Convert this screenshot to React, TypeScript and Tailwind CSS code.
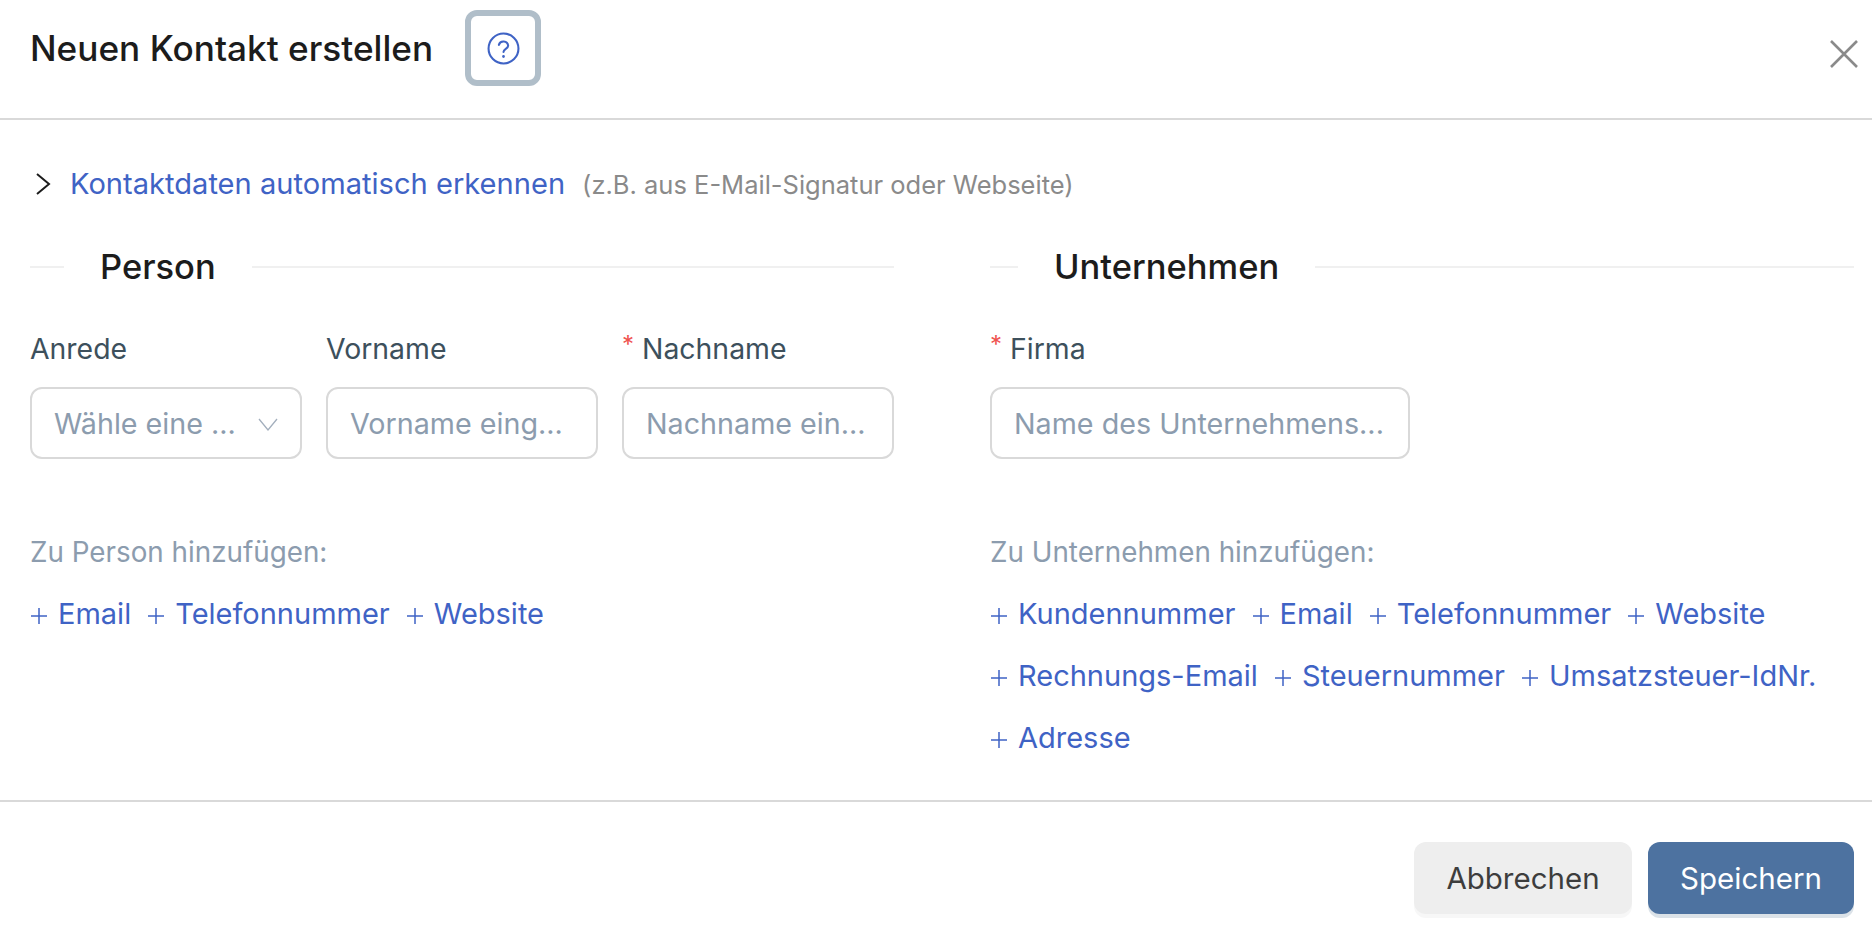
const personLinks = ['Email', 'Telefonnummer', 'Website'];
const companyLinks = [
  'Kundennummer',
  'Email',
  'Telefonnummer',
  'Website',
  'Rechnungs-Email',
  'Steuernummer',
  'Umsatzsteuer-IdNr.',
  'Adresse',
];

function SectionTitle({ title, lead }: { title: string; lead: string }) {
  return (
    <div className="flex items-center h-[40px]">
      <div className={`${lead} h-[2px] bg-[#f0f0f0]`} />
      <h2 className="px-[36px] text-[34.5px] leading-[40px] font-medium text-[#1c1c1c] whitespace-nowrap">{title}</h2>
      <div className="flex-1 h-[2px] bg-[#f0f0f0]" />
    </div>
  );
}

function FieldLabel({ text, required }: { text: string; required?: boolean }) {
  return (
    <div className="h-[36px] flex items-center text-[28.4px] leading-[36px] text-[#3d505c] whitespace-nowrap">
      {required && <span className="text-[#ef5350] text-[24px] mr-[8px] -mt-[8px]">*</span>}
      {text}
    </div>
  );
}

function TextField({ placeholder }: { placeholder: string }) {
  return (
    <div className="mt-[20px] h-[72px] px-[22px] pt-[2px] flex items-center border-2 border-[#d9d9d9] rounded-[12px] text-[28.7px] text-[#8c9cae] whitespace-nowrap overflow-hidden">
      {placeholder}
    </div>
  );
}

function AddLinks({ heading, items }: { heading: string; items: string[] }) {
  return (
    <div className="mt-[76px]">
      <div className="h-[36px] flex items-center text-[27.8px] text-[#8c9cae]">{heading}</div>
      <div className="mt-[25px] flex flex-wrap gap-x-[16px] gap-y-[26px]">
        {items.map((item) => (
          <a key={item} className="h-[36px] flex items-center text-[29px] text-[#3f63c5] whitespace-nowrap">
            <svg width="18" height="18" viewBox="0 0 18 18" className="mr-[10px] mt-[4px]" stroke="#3f63c5" strokeWidth="1.5">
              <path d="M1 9h16M9 1v16" />
            </svg>
            {item}
          </a>
        ))}
      </div>
    </div>
  );
}

export default function App() {
  return (
    <div className="w-[1872px] h-[942px] bg-white overflow-hidden font-['Inter',sans-serif]">
      <header className="h-[120px] pl-[30px] pr-[14px] border-b-2 border-[#d9d9d9] flex items-start">
        <h1 className="mt-[28px] text-[35.2px] leading-[40px] font-medium text-[#1c1c1c]">Neuen Kontakt erstellen</h1>
        <button className="mt-[10px] ml-[32px] w-[76px] h-[76px] border-[6px] border-[#b0bec9] rounded-[12px] flex items-center justify-center">
          <svg width="33" height="33" viewBox="0 0 32 32" fill="none" stroke="#3f63c5" strokeWidth="2" strokeLinecap="round">
            <circle cx="16" cy="16" r="14.5" />
            <path d="M11.5 12.5a4.6 4.6 0 0 1 9 .8c0 2.8-4.5 3.4-4.5 6" />
            <path d="M16 23.6v.2" strokeWidth="2.6" />
          </svg>
        </button>
        <button className="ml-auto mt-[40px]">
          <svg width="28" height="28" viewBox="0 0 28 28" fill="none" stroke="#8a8a8a" strokeWidth="2.6" className="block">
            <path d="M1 1l26 26M27 1L1 27" />
          </svg>
        </button>
      </header>

      <main className="pl-[30px] pr-[18px]">
        <div className="mt-[46px] h-[36px] flex items-center whitespace-nowrap">
          <svg width="16" height="24" viewBox="0 0 16 24" fill="none" stroke="#1c1c1c" strokeWidth="2" className="ml-[5px] mr-[19px]">
            <path d="M2 2l12 10L2 22" />
          </svg>
          <span className="text-[29.1px] text-[#3f63c5]">Kontaktdaten automatisch erkennen</span>
          <span className="ml-[17px] pt-[2px] text-[25.5px] text-[#8a8a8a]">(z.B. aus E-Mail-Signatur oder Webseite)</span>
        </div>

        <div className="mt-[45px] grid grid-cols-2 gap-x-[96px]">
          <section>
            <SectionTitle title="Person" lead="w-[34px]" />
            <div className="mt-[44px] grid grid-cols-3 gap-x-[24px]">
              <div>
                <FieldLabel text="Anrede" />
                <div className="mt-[20px] h-[72px] pl-[22px] pr-[22px] pt-[2px] flex items-center justify-between border-2 border-[#d9d9d9] rounded-[12px] text-[28.7px] text-[#8c9cae] whitespace-nowrap">
                  Wähle eine ...
                  <svg width="20" height="13" viewBox="0 0 20 13" fill="none" stroke="#a3afbd" strokeWidth="1.3">
                    <path d="M1 1l9 11 9-11" />
                  </svg>
                </div>
              </div>
              <div>
                <FieldLabel text="Vorname" />
                <TextField placeholder="Vorname eing..." />
              </div>
              <div>
                <FieldLabel text="Nachname" required />
                <TextField placeholder="Nachname ein..." />
              </div>
            </div>
            <AddLinks heading="Zu Person hinzufügen:" items={personLinks} />
          </section>

          <section>
            <SectionTitle title="Unternehmen" lead="w-[28px]" />
            <div className="mt-[44px] w-[420px]">
              <FieldLabel text="Firma" required />
              <TextField placeholder="Name des Unternehmens..." />
            </div>
            <AddLinks heading="Zu Unternehmen hinzufügen:" items={companyLinks} />
          </section>
        </div>
      </main>

      <footer className="mt-[44px] pt-[40px] pr-[18px] border-t-2 border-[#d9d9d9] flex justify-end gap-[16px]">
        <button className="w-[218px] h-[72px] rounded-[12px] bg-[#eeeeee] shadow-[0_4px_0_#f7f7f7] text-[29.5px] text-[#3d3d3d]">Abbrechen</button>
        <button className="w-[206px] h-[72px] rounded-[12px] bg-[#4d72a0] shadow-[0_4px_0_#dbe2e8] text-[29.5px] text-white">Speichern</button>
      </footer>
    </div>
  );
}
